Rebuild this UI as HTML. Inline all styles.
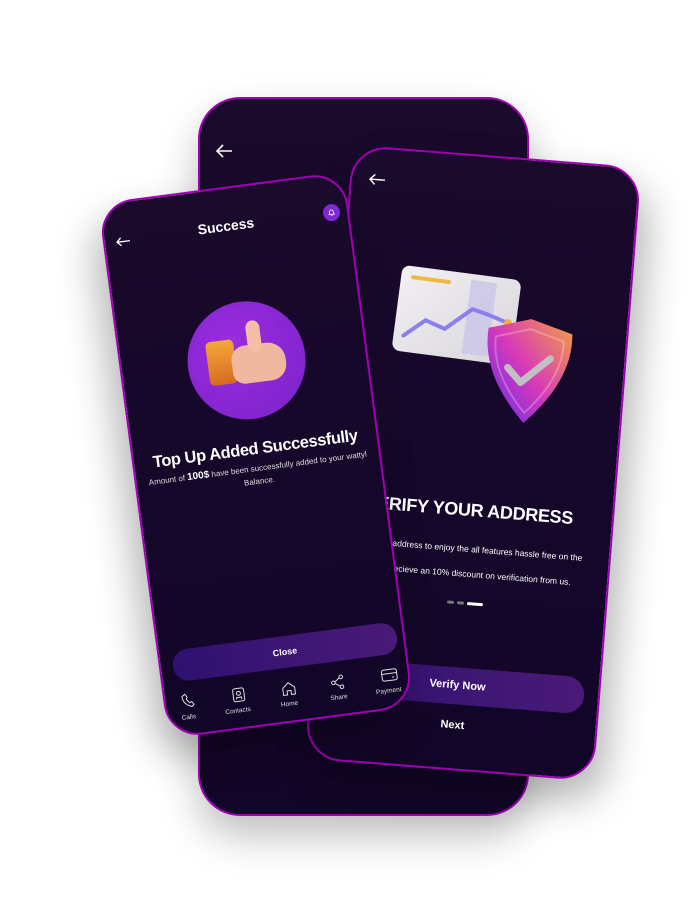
<!DOCTYPE html>
<html><head><meta charset="utf-8">
<style>
*{margin:0;padding:0;box-sizing:border-box}
body{width:693px;height:920px;background:#fff;position:relative;overflow:hidden;font-family:"Liberation Sans",sans-serif;color:#fff}
.ph{position:absolute;border:2.5px solid #a000b4;background:linear-gradient(180deg,#1a0a2c 0%,#14072a 60%,#120628 100%);overflow:hidden}
.abs{position:absolute}
.c{position:absolute;left:0;right:0;text-align:center}
</style></head><body>

<!-- back phone -->
<div class="ph" style="left:198px;top:97px;width:331px;height:719px;border-radius:42px;box-shadow:0 20px 40px rgba(0,0,0,.25)">
  <svg class="abs" style="left:14px;top:44px" width="20" height="16" viewBox="0 0 20 16"><path d="M18 8H3M9 2L3 8l6 6" stroke="#fff" stroke-width="1.6" fill="none"/></svg>
</div>

<!-- right phone -->
<div class="ph" style="left:328px;top:155px;width:290px;height:616px;border-radius:36px;transform:rotate(4.5deg);box-shadow:10px 20px 40px rgba(0,0,0,.3)">
  <svg class="abs" style="left:16px;top:24px" width="18" height="14" viewBox="0 0 18 14"><path d="M17 7H2M7 2L2 7l5 5" stroke="#fff" stroke-width="1.4" fill="none"/></svg>
  <!-- card -->
  <div class="abs" style="left:55px;top:117px;width:120px;height:86px;border-radius:8px;background:linear-gradient(135deg,#f2f0f2,#d8d6dc);transform:rotate(3deg)">
    <div class="abs" style="left:70px;top:6px;width:26px;height:74px;background:#c9c4e8;opacity:.8"></div>
    <div class="abs" style="left:10px;top:9px;width:40px;height:4px;border-radius:2px;background:#f0b840"></div>
    <svg class="abs" style="left:0;top:0" width="120" height="86"><path d="M10 70L30 52 50 58 75 35 90 38 112 44" stroke="#8a7ef0" stroke-width="4" fill="none" stroke-linecap="round"/><circle cx="112" cy="44" r="4" fill="#f0b040"/></svg>
  </div>
  <!-- shield -->
  <svg class="abs" style="left:140px;top:156px" width="100" height="110" viewBox="0 0 100 110">
    <defs><linearGradient id="sg" x1="0" y1="1" x2="1" y2="0"><stop offset="0" stop-color="#5a2af0"/><stop offset=".5" stop-color="#d83ab8"/><stop offset="1" stop-color="#f3a040"/></linearGradient></defs>
    <path d="M50 2L92 14Q96 60 50 106Q4 60 8 14Z" fill="url(#sg)"/>
    <path d="M50 12L84 22Q86 58 50 96Q14 58 16 22Z" fill="none" stroke="rgba(255,255,255,.25)" stroke-width="2"/>
    <path d="M30 52L44 66 72 40" stroke="#bfbfc4" stroke-width="7" fill="none" stroke-linecap="round" stroke-linejoin="round"/>
  </svg>
  <div class="c" style="top:343px;font-size:18px;font-weight:bold;letter-spacing:-.3px;white-space:nowrap">VERIFY YOUR ADDRESS</div>
  <div class="c" style="top:387px;font-size:8.5px;white-space:nowrap;left:-20px;right:-20px">Verify your address to enjoy the all features hassle free on the</div>
  <div class="c" style="top:412px;font-size:8.5px;white-space:nowrap;left:-20px;right:-20px">app and recieve an 10% discount on verification from us.</div>
  <div class="abs" style="left:128px;top:445px;width:7px;height:3px;background:#777;border-radius:2px"></div>
  <div class="abs" style="left:138px;top:445px;width:7px;height:3px;background:#777;border-radius:2px"></div>
  <div class="abs" style="left:148px;top:445px;width:16px;height:3px;background:#fff;border-radius:2px"></div>
  <div class="abs" style="left:18px;top:511px;width:254px;height:37px;border-radius:19px;background:linear-gradient(90deg,#2e1170,#4a1a78);font-size:11px;font-weight:bold;text-align:center;line-height:37px">Verify Now</div>
  <div class="c" style="top:563px;font-size:11px;font-weight:bold">Next</div>
</div>

<!-- left phone -->
<div class="ph" style="left:132px;top:185px;width:248px;height:540px;border-radius:34px;transform:rotate(-7.5deg);box-shadow:-10px 20px 40px rgba(0,0,0,.3)">
  <svg class="abs" style="left:10px;top:33px" width="16" height="12" viewBox="0 0 16 12"><path d="M15 6H2M6 2L2 6l4 4" stroke="#fff" stroke-width="1.3" fill="none"/></svg>
  <div class="c" style="top:29px;font-size:14px;font-weight:bold">Success</div>
  <div class="abs" style="left:220px;top:29px;width:17px;height:17px;border-radius:50%;background:#7b2ad6"></div>
  <svg class="abs" style="left:224px;top:33px" width="9" height="9" viewBox="0 0 10 10"><path d="M2 7h6L7 6V4a2 2 0 0 0-4 0v2zM4 8.5h2" stroke="#fff" stroke-width=".8" fill="none"/></svg>
  <div class="abs" style="left:66px;top:114px;width:118px;height:118px;border-radius:50%;background:radial-gradient(circle at 40% 35%,#9a2ce0,#7a22c8)"></div>
  <div class="abs" style="left:86px;top:150px;width:28px;height:44px;border-radius:5px;background:linear-gradient(180deg,#f3a83a,#d86a22)"></div>
  <div class="abs" style="left:110px;top:158px;width:54px;height:38px;border-radius:14px 18px 16px 12px;background:#f0b8a0"></div>
  <div class="abs" style="left:128px;top:134px;width:14px;height:32px;border-radius:7px;background:#f3bda6"></div>
  <div class="c" style="top:253px;font-size:16.5px;font-weight:bold;letter-spacing:-.4px;white-space:nowrap;left:-10px;right:-10px">Top Up Added Successfully</div>
  <div class="c" style="top:276px;font-size:8px;white-space:nowrap;left:-10px;right:-10px;color:#ddd">Amount of <b style="font-size:10px;color:#fff">100$</b> have been successfully added to your wattyl</div>
  <div class="c" style="top:290px;font-size:8px;color:#ddd">Balance.</div>
  <div class="abs" style="left:12px;top:451px;width:226px;height:32px;border-radius:16px;background:linear-gradient(90deg,#2e1170,#4a1a78);font-size:9px;font-weight:bold;text-align:center;line-height:32px">Close</div>
  <svg class="abs" style="left:0;top:494px" width="248" height="20" viewBox="0 0 248 20" fill="none" stroke="#ddd" stroke-width="1">
    <path d="M17 4q0 8 9 11l2-2-2-3-2 1q-2-2-3-4l1-2-2-3z"/>
    <rect x="68" y="3" width="11" height="13" rx="2"/><circle cx="73.5" cy="8" r="2"/><path d="M71 14v-2h5v2"/>
    <path d="M118 16V9l6-5 6 5v7h-4v-4h-4v4z"/>
    <circle cx="169" cy="10" r="1.8"/><circle cx="177" cy="5" r="1.8"/><circle cx="177" cy="15" r="1.8"/><path d="M171 9l4-3M171 11l4 3"/>
    <rect x="218" y="4" width="15" height="11" rx="2"/><path d="M218 8h15M228 12h2"/>
  </svg>
  <div class="abs" style="left:14px;top:516px;font-size:6.5px;color:#ddd">Calls</div>
  <div class="abs" style="left:58px;top:516px;font-size:6.5px;color:#ddd">Contacts</div>
  <div class="abs" style="left:114px;top:516px;font-size:6.5px;color:#ddd">Home</div>
  <div class="abs" style="left:164px;top:516px;font-size:6.5px;color:#ddd">Share</div>
  <div class="abs" style="left:210px;top:516px;font-size:6.5px;color:#ddd">Payment</div>
</div>

</body></html>
